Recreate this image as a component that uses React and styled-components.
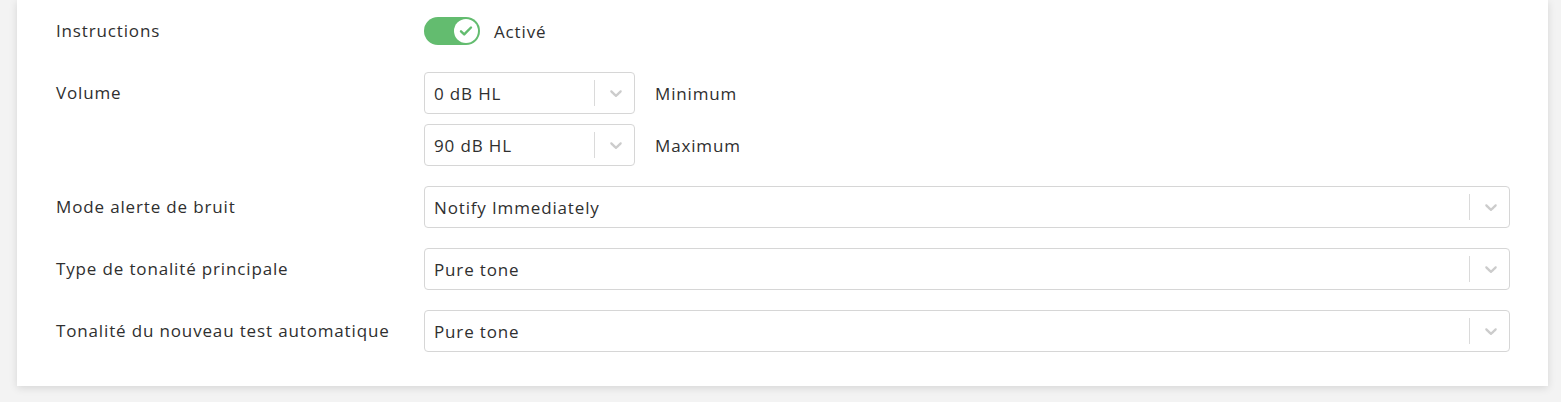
import React from "react";
import styled, { createGlobalStyle } from "styled-components";

const Global = createGlobalStyle`
  html, body { margin: 0; padding: 0; background: #f3f3f3; }
  body { font-family: "Open Sans", "Noto Sans", sans-serif; color: #333; }
  * { box-sizing: border-box; }
`;

const Page = styled.div`
  padding: 0 13px 16px 17px;
`;

const Card = styled.div`
  background: #fff;
  box-shadow: 0 2px 8px rgba(0, 0, 0, 0.12);
  padding: 10px 38px 34px 39px;
  display: grid;
  grid-template-columns: 368px 1fr;
  row-gap: 20px;
  align-items: start;
`;

const fontStyle = `
  font-size: 17px;
  letter-spacing: 0.85px;
  color: #2f2f2f;
`;

const Label = styled.div`
  ${fontStyle}
  line-height: 42px;
  height: 42px;
  white-space: nowrap;
`;

const Control = styled.div`
  display: flex;
  flex-direction: column;
  gap: 10px;
`;

const Inline = styled.div`
  display: flex;
  align-items: center;
  min-height: 42px;
  gap: ${(p) => p.$gap || 20}px;
`;

const Switch = styled.div`
  width: 56px;
  height: 28px;
  border-radius: 14px;
  background: #63bc6f;
  display: flex;
  align-items: center;
  justify-content: flex-end;
  padding: 2px;
`;

const Knob = styled.div`
  width: 24px;
  height: 24px;
  border-radius: 50%;
  background: #fff;
  display: flex;
  align-items: center;
  justify-content: center;
`;

const Text = styled.span`
  ${fontStyle}
`;

const SelectBox = styled.div`
  width: ${(p) => (p.$width ? `${p.$width}px` : "100%")};
  height: 42px;
  border: 1px solid #d6d6d6;
  border-radius: 4px;
  background: #fff;
  display: flex;
  align-items: stretch;
`;

const Value = styled.div`
  ${fontStyle}
  flex: 1;
  display: flex;
  align-items: center;
  padding-left: 9px;
`;

const Separator = styled.span`
  width: 1px;
  background: #dadada;
  margin: 7px 0 7px;
`;

const Indicator = styled.div`
  width: 39px;
  display: flex;
  align-items: center;
  justify-content: center;
  padding-left: 3px;
  color: #cccccc;
`;

const Chevron = () => (
  <svg width="20" height="20" viewBox="0 0 20 20" fill="currentColor">
    <path d="M4.516 7.548c0.436-0.446 1.043-0.481 1.576 0l3.908 3.747 3.908-3.747c0.533-0.481 1.141-0.446 1.574 0 0.436 0.445 0.408 1.197 0 1.615-0.406 0.418-4.695 4.502-4.695 4.502-0.217 0.223-0.502 0.335-0.787 0.335s-0.57-0.112-0.789-0.335c0 0-4.287-4.084-4.695-4.502s-0.436-1.17 0-1.615z" />
  </svg>
);

const Select = ({ value, width }) => (
  <SelectBox $width={width}>
    <Value>{value}</Value>
    <Separator />
    <Indicator>
      <Chevron />
    </Indicator>
  </SelectBox>
);

export default function App() {
  return (
    <>
      <Global />
      <Page>
        <Card>
          <Label>Instructions</Label>
          <Inline $gap={14}>
            <Switch>
              <Knob>
                <svg width="16" height="16" viewBox="0 0 16 16" fill="none">
                  <path d="M3 8.3l3.2 3.1 6.8-6.9" stroke="#63bc6f" strokeWidth="2.4" strokeLinecap="round" strokeLinejoin="round" />
                </svg>
              </Knob>
            </Switch>
            <Text>Activé</Text>
          </Inline>

          <Label>Volume</Label>
          <Control>
            <Inline>
              <Select value="0 dB HL" width={211} />
              <Text>Minimum</Text>
            </Inline>
            <Inline>
              <Select value="90 dB HL" width={211} />
              <Text>Maximum</Text>
            </Inline>
          </Control>

          <Label>Mode alerte de bruit</Label>
          <Select value="Notify Immediately" />

          <Label>Type de tonalité principale</Label>
          <Select value="Pure tone" />

          <Label>Tonalité du nouveau test automatique</Label>
          <Select value="Pure tone" />
        </Card>
      </Page>
    </>
  );
}
